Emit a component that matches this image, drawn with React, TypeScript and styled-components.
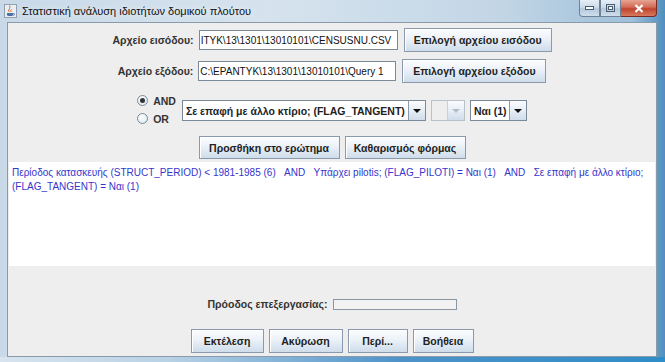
import React from "react";
import styled, { createGlobalStyle } from "styled-components";

const Global = createGlobalStyle`
  html, body { margin: 0; padding: 0; }
  body { width: 665px; height: 362px; overflow: hidden; font-family: "Liberation Sans", Arial, sans-serif; }
`;

const Window = styled.div`
  width: 665px;
  height: 362px;
  box-sizing: border-box;
  display: flex;
  flex-direction: column;
  background: linear-gradient(90deg, #c9d9e8 0%, #d6e3ee 40%, #c3d6e6 75%, #9fc0da 95%, #4f8fbf 100%);
  padding: 0 8px 5px 7px;
  position: relative;
  overflow: hidden;
`;

const BottomGlow = styled.div`
  position: absolute;
  left: 0;
  right: 0;
  bottom: 0;
  height: 5px;
  background: linear-gradient(90deg, #d8e4ee 0%, #b9d2e6 25%, #4d93c9 60%, #2f8dc8 100%);
`;

const TitleBar = styled.div`
  height: 22px;
  display: flex;
  align-items: center;
  margin-left: -3px;
  gap: 5px;
`;

const TitleText = styled.span`
  font-family: "Liberation Sans", Arial, sans-serif;
  font-size: 11px;
  color: #111;
  text-shadow: 0 0 6px rgba(255,255,255,0.9);
`;

const Controls = styled.div`
  margin-left: auto;
  align-self: flex-start;
  display: flex;
  margin-right: 0px;
`;

const CtlBtn = styled.div<{ $w: number; $close?: boolean }>`
  width: ${(p) => p.$w}px;
  height: 17px;
  box-sizing: border-box;
  border: 1px solid ${(p) => (p.$close ? "#7a2a22" : "#6f8296")};
  border-top: none;
  border-left-width: ${(p) => (p.$close ? 0 : 1)}px;
  background: ${(p) =>
    p.$close
      ? "linear-gradient(180deg, #e8a493 0%, #d26a55 45%, #c0442d 55%, #d67a5e 100%)"
      : "linear-gradient(180deg, #e6eef6 0%, #ccdbe9 45%, #b5c9dc 55%, #cfdeec 100%)"};
  display: flex;
  align-items: center;
  justify-content: center;
  border-radius: ${(p) => (p.$close ? "0 0 4px 0" : "0")};
  &:first-child { border-radius: 0 0 0 4px; }
`;

const Panel = styled.div`
  flex: 1;
  background: #eeeeee;
  border: 1px solid #8b9aab;
  display: flex;
  flex-direction: column;
  align-items: center;
  padding-top: 5px;
`;

const Row = styled.div<{ $mt: number }>`
  display: flex;
  align-items: center;
  gap: 5px;
  margin-top: ${(p) => p.$mt}px;
`;

const Label = styled.span`
  font-size: 10.5px;
  font-weight: bold;
  color: #333;
`;

const Field = styled.div<{ $w: number }>`
  width: ${(p) => p.$w}px;
  height: 20px;
  box-sizing: border-box;
  background: #fff;
  border: 1px solid #7a8a99;
  font-size: 10px;
  color: #111;
  padding: 0 1px;
  display: flex;
  align-items: center;
  white-space: nowrap;
  overflow: hidden;
  margin-right: 1px;
`;

const Button = styled.button<{ $w: number; $h?: number }>`
  width: ${(p) => p.$w}px;
  height: ${(p) => p.$h ?? 24}px;
  box-sizing: border-box;
  border: 1px solid #8a99ab;
  box-shadow: inset 1px 1px 0 #ffffff;
  background: linear-gradient(180deg, #fbfcfe 0%, #eef3f9 40%, #dbe6f1 75%, #cfdcea 100%);
  font-family: "Liberation Sans", Arial, sans-serif;
  font-size: 10.5px;
  font-weight: bold;
  color: #222;
  padding: 0;
  white-space: nowrap;
`;

const RadioGroup = styled.div`
  display: flex;
  flex-direction: column;
  gap: 3px;
  align-self: flex-start;
  margin-right: 1px;
`;

const RadioItem = styled.label`
  display: flex;
  align-items: center;
  gap: 5px;
  height: 15px;
  font-size: 10.5px;
  font-weight: bold;
  color: #333;
`;

const RadioDot = styled.span<{ $on?: boolean }>`
  width: 9px;
  height: 9px;
  border-radius: 50%;
  border: 1px solid #7a8a99;
  background: radial-gradient(circle at 40% 35%, #ffffff 0%, #e3ebf3 70%, #c9d7e5 100%);
  display: flex;
  align-items: center;
  justify-content: center;
  &::after {
    content: "";
    width: 5px;
    height: 5px;
    border-radius: 50%;
    background: ${(p) => (p.$on ? "#333" : "transparent")};
  }
`;

const Combo = styled.div<{ $w: number; $disabled?: boolean }>`
  width: ${(p) => p.$w}px;
  height: 21px;
  box-sizing: border-box;
  display: flex;
  border: 1px solid ${(p) => (p.$disabled ? "#b8c0c8" : "#7a8a99")};
  background: ${(p) => (p.$disabled ? "#eeeeee" : "#fff")};
  margin-top: 2px;
`;

const ComboText = styled.span`
  flex: 1;
  font-size: 10.5px;
  font-weight: bold;
  color: #222;
  display: flex;
  align-items: center;
  padding-left: 3px;
  white-space: nowrap;
  overflow: hidden;
`;

const ComboArrow = styled.span<{ $disabled?: boolean }>`
  width: 17px;
  box-sizing: border-box;
  border-left: 1px solid ${(p) => (p.$disabled ? "#c8cfd6" : "#8a99ab")};
  background: linear-gradient(180deg, #fbfcfe 0%, #e6eef6 50%, #d0dcea 100%);
  display: flex;
  align-items: center;
  justify-content: center;
  &::after {
    content: "";
    border-left: 4px solid transparent;
    border-right: 4px solid transparent;
    border-top: 4px solid ${(p) => (p.$disabled ? "#b4bcc6" : "#111")};
  }
`;

const Query = styled.div`
  align-self: stretch;
  margin: 3px 1px 0 1px;
  height: 104px;
  background: #fff;
  box-sizing: border-box;
  padding: 4px 3px;
  font-size: 10px;
  line-height: 14px;
  color: #3535cc;
  white-space: pre-wrap;
`;

const ProgressLabel = styled.span`
  font-size: 10.5px;
  font-weight: bold;
  color: #333;
`;

const Progress = styled.div`
  width: 124px;
  height: 11px;
  box-sizing: border-box;
  border: 1px solid #8a96a3;
  background: #f2f2f2;
`;

const JavaIcon = () => (
  <svg width="13" height="14" viewBox="0 0 13 14">
    <rect x="0.5" y="0.5" width="12" height="13" fill="#e9eef3" stroke="#8fa0b2" />
    <path d="M3 9 h6 v1.5 q0 1.5 -1.5 1.5 h-3 q-1.5 0 -1.5 -1.5z" fill="#4a6fa5" />
    <path d="M9 9.5 q2 0 1.5 1.3 q-0.4 0.7 -1.5 0.5" fill="none" stroke="#4a6fa5" strokeWidth="0.8" />
    <path d="M5 8 q-1 -2 0.5 -3.5 q1 -1 0 -3" fill="none" stroke="#e06b2a" strokeWidth="1" />
    <path d="M7 8 q-0.8 -1.5 0.4 -2.6" fill="none" stroke="#e06b2a" strokeWidth="1" />
  </svg>
);

export default function App() {
  return (
    <>
      <Global />
      <Window>
        <TitleBar>
          <JavaIcon />
          <TitleText>Στατιστική ανάλυση ιδιοτήτων δομικού πλούτου</TitleText>
          <Controls>
            <CtlBtn $w={21}>
              <svg width="9" height="4" viewBox="0 0 9 4">
                <rect x="0.5" y="0.5" width="8" height="3" fill="#fff" stroke="#4b5d72" />
              </svg>
            </CtlBtn>
            <CtlBtn $w={21}>
              <svg width="9" height="8" viewBox="0 0 9 8">
                <rect x="0.5" y="0.5" width="8" height="7" fill="none" stroke="#4b5d72" />
                <rect x="2.5" y="2.5" width="4" height="3" fill="#fff" stroke="#4b5d72" />
              </svg>
            </CtlBtn>
            <CtlBtn $w={36} $close>
              <svg width="10" height="9" viewBox="0 0 10 9">
                <path d="M1.5 1 L8.5 8 M8.5 1 L1.5 8" stroke="#fff" strokeWidth="2.2" />
              </svg>
            </CtlBtn>
          </Controls>
        </TitleBar>
        <Panel>
          <Row $mt={0}>
            <Label>Αρχείο εισόδου:</Label>
            <Field $w={199}>ITYK\13\1301\13010101\CENSUSNU.CSV</Field>
            <Button $w={148}>Επιλογή αρχείου εισόδου</Button>
          </Row>
          <Row $mt={7}>
            <Label>Αρχείο εξόδου:</Label>
            <Field $w={198}>C:\EPANTYK\13\1301\13010101\Query 1</Field>
            <Button $w={144}>Επιλογή αρχείου εξόδου</Button>
          </Row>
          <Row $mt={10}>
            <RadioGroup>
              <RadioItem>
                <RadioDot $on />
                AND
              </RadioItem>
              <RadioItem>
                <RadioDot />
                OR
              </RadioItem>
            </RadioGroup>
            <Combo $w={244}>
              <ComboText>Σε επαφή με άλλο κτίριο; (FLAG_TANGENT)</ComboText>
              <ComboArrow />
            </Combo>
            <Combo $w={34} $disabled>
              <ComboText>&nbsp;</ComboText>
              <ComboArrow $disabled />
            </Combo>
            <Combo $w={57}>
              <ComboText>Ναι (1)</ComboText>
              <ComboArrow />
            </Combo>
          </Row>
          <Row $mt={10}>
            <Button $w={141} $h={23}>Προσθήκη στο ερώτημα</Button>
            <Button $w={121} $h={23}>Καθαρισμός φόρμας</Button>
          </Row>
          <Query>
            {"Περίοδος κατασκευής (STRUCT_PERIOD) < 1981-1985 (6)   AND   Υπάρχει pilotis; (FLAG_PILOTI) = Ναι (1)   AND   Σε επαφή με άλλο κτίριο; (FLAG_TANGENT) = Ναι (1)"}
          </Query>
          <Row $mt={32}>
            <ProgressLabel>Πρόοδος επεξεργασίας:</ProgressLabel>
            <Progress />
          </Row>
          <Row $mt={19}>
            <Button $w={73}>Εκτέλεση</Button>
            <Button $w={74}>Ακύρωση</Button>
            <Button $w={60}>Περί...</Button>
            <Button $w={61}>Βοήθεια</Button>
          </Row>
        </Panel>
        <BottomGlow />
      </Window>
    </>
  );
}
